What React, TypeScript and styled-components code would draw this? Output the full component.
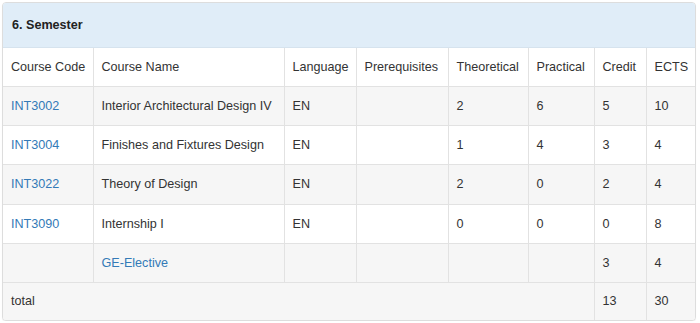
import React from 'react';
import styled, { createGlobalStyle } from 'styled-components';

const GlobalStyle = createGlobalStyle`
  body {
    margin: 0;
    background: #fff;
    font-family: "Liberation Sans", Arial, Helvetica, sans-serif;
    font-size: 12.6px;
    color: #333;
  }
`;

const Panel = styled.div`
  margin: 2px 0 0 2px;
  width: 692px;
  border: 1px solid #ddd;
  border-radius: 4px;
  overflow: hidden;
  background: #fff;
  box-shadow: 0 1px 1px rgba(0, 0, 0, 0.05);
`;

const Heading = styled.div`
  height: 44px;
  display: flex;
  align-items: center;
  padding: 0 9px;
  background: #e0edf8;
  border-bottom: 1px solid #d6e3ee;
  font-weight: bold;
  font-size: 12.6px;
  color: #222;
`;

const Table = styled.table`
  width: 100%;
  table-layout: fixed;
  border-collapse: collapse;
`;

const Col = styled.col<{ $w: number }>`
  width: ${(p) => p.$w}px;
`;

const Row = styled.tr<{ $striped?: boolean; $height?: number }>`
  height: ${(p) => p.$height ?? 39}px;
  background: ${(p) => (p.$striped ? '#f6f6f6' : '#fff')};
  border-top: 1px solid #e2e2e2;
  &:first-child {
    border-top: none;
  }
`;

const Cell = styled.td`
  padding: 0 8px;
  border-left: 1px solid #e2e2e2;
  vertical-align: middle;
  white-space: nowrap;
  overflow: hidden;
  &:first-child {
    border-left: none;
  }
`;

const Link = styled.a`
  color: #337ab7;
  text-decoration: none;
`;

const widths = [90, 191, 72, 92, 80, 66, 52, 49];
const headers = ['Course Code', 'Course Name', 'Language', 'Prerequisites', 'Theoretical', 'Practical', 'Credit', 'ECTS'];

const courses = [
  { code: 'INT3002', name: 'Interior Architectural Design IV', lang: 'EN', pre: '', t: '2', p: '6', c: '5', e: '10' },
  { code: 'INT3004', name: 'Finishes and Fixtures Design', lang: 'EN', pre: '', t: '1', p: '4', c: '3', e: '4' },
  { code: 'INT3022', name: 'Theory of Design', lang: 'EN', pre: '', t: '2', p: '0', c: '2', e: '4' },
  { code: 'INT3090', name: 'Internship I', lang: 'EN', pre: '', t: '0', p: '0', c: '0', e: '8' },
];

export default function App() {
  return (
    <>
      <GlobalStyle />
      <Panel>
        <Heading>6. Semester</Heading>
        <Table>
          <colgroup>
            {widths.map((w, i) => (
              <Col key={i} $w={w} />
            ))}
          </colgroup>
          <tbody>
            <Row $height={38}>
              {headers.map((h) => (
                <Cell key={h}>{h}</Cell>
              ))}
            </Row>
            {courses.map((c, i) => (
              <Row key={c.code} $striped={i % 2 === 0} $height={i === 2 ? 40 : 39}>
                <Cell><Link href="#">{c.code}</Link></Cell>
                <Cell>{c.name}</Cell>
                <Cell>{c.lang}</Cell>
                <Cell>{c.pre}</Cell>
                <Cell>{c.t}</Cell>
                <Cell>{c.p}</Cell>
                <Cell>{c.c}</Cell>
                <Cell>{c.e}</Cell>
              </Row>
            ))}
            <Row $striped>
              <Cell />
              <Cell><Link href="#">GE-Elective</Link></Cell>
              <Cell />
              <Cell />
              <Cell />
              <Cell />
              <Cell>3</Cell>
              <Cell>4</Cell>
            </Row>
            <Row $striped $height={38}>
              <Cell colSpan={6}>total</Cell>
              <Cell>13</Cell>
              <Cell>30</Cell>
            </Row>
          </tbody>
        </Table>
      </Panel>
    </>
  );
}
